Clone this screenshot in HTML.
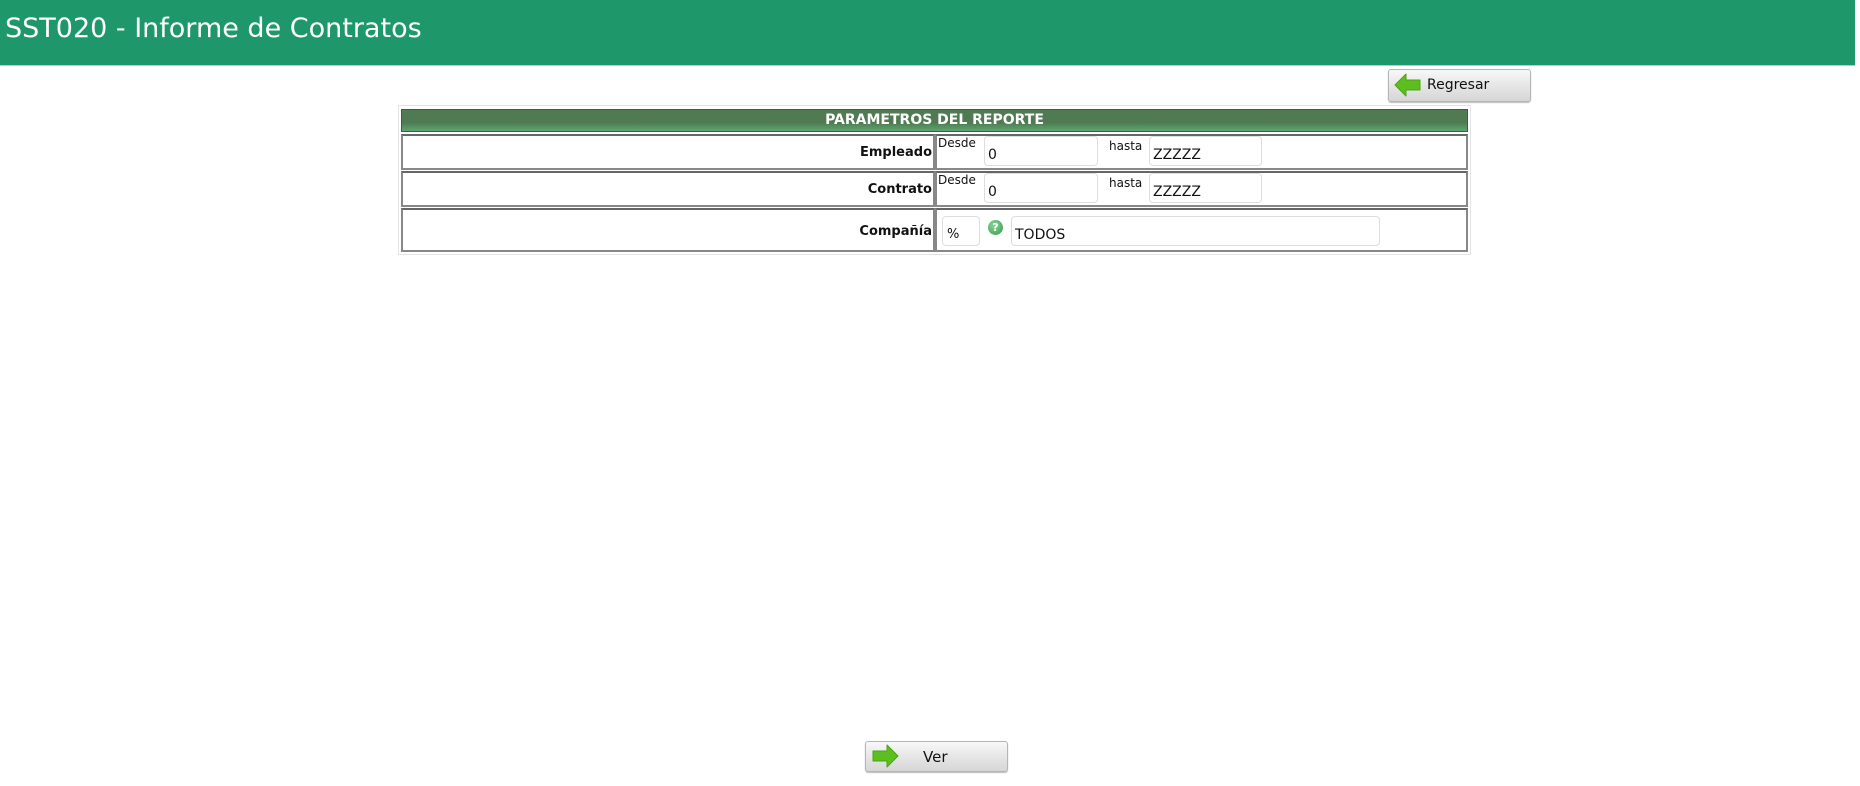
<!DOCTYPE html>
<html><head><meta charset="utf-8"><style>
body{margin:0;width:1860px;height:786px;background:#fff;position:relative;overflow:hidden;font-family:"DejaVu Sans","Liberation Sans",sans-serif}
.a{position:absolute}
#hdr{left:5px;top:0;width:1855px;height:65px;background:#1e986a;border-bottom:1px solid #9fd9c0}
#hdr span{position:absolute;left:5px;top:13px;color:#fff;font-size:27px;letter-spacing:0px}
.btn{position:absolute;border:1px solid #b5b5b5;border-radius:3px;background:linear-gradient(#f8f8f8,#e6e6e6 50%,#d6d6d6);box-shadow:0 1px 1px #bbb;font-size:14px;color:#111}
.box{position:absolute;border:2px solid #888;box-sizing:border-box;border-top-color:#666}
.lbl{position:absolute;font-weight:bold;font-size:13px;color:#111;text-align:right}
.inp{position:absolute;border:1px solid #ddd;border-radius:4px;background:#fff;box-sizing:border-box;font-size:14px;color:#111;padding:10px 0 0 3px}
.sm{position:absolute;font-size:12px;color:#111}
</style></head><body>
<div id="hdr"><span>SST020 - Informe de Contratos</span></div>

<div class="btn" style="left:1388px;top:69px;width:141px;height:31px">
<svg class="a" style="left:5px;top:3px" width="28" height="24" viewBox="0 0 28 24"><path d="M1 12 L12 1 L12 7 L26 7 L26 17 L12 17 L12 23 Z" fill="#5cbf1f" stroke="#4aa516" stroke-width="1" stroke-linejoin="round"/></svg>
<span class="a" style="left:38px;top:7px">Regresar</span></div>

<div class="a" style="left:398px;top:105px;width:1073px;height:150px;border:1px solid #e4e4e4;box-sizing:border-box"></div>
<div class="a" style="left:401px;top:109px;width:1067px;height:23px;background:linear-gradient(#4f7a52 0,#4f7a52 60%,#5aa870 100%);border:1px solid #3d5c40;box-sizing:border-box;color:#fff;font-weight:bold;font-size:14px;text-align:center;line-height:21px">PARAMETROS DEL REPORTE</div>

<div class="box" style="left:401px;top:134px;width:534px;height:36px"></div>
<div class="box" style="left:935px;top:134px;width:533px;height:36px"></div>
<div class="box" style="left:401px;top:171px;width:534px;height:36px"></div>
<div class="box" style="left:935px;top:171px;width:533px;height:36px"></div>
<div class="box" style="left:401px;top:208px;width:534px;height:44px"></div>
<div class="box" style="left:935px;top:208px;width:533px;height:44px"></div>

<div class="lbl" style="left:600px;width:332px;top:145px">Empleado</div>
<div class="lbl" style="left:600px;width:332px;top:182px">Contrato</div>
<div class="lbl" style="left:600px;width:332px;top:224px">Compañía</div>

<div class="sm" style="left:938px;top:136px">Desde</div>
<div class="inp" style="left:984px;top:136px;width:114px;height:30px">0</div>
<div class="sm" style="left:1109px;top:139px">hasta</div>
<div class="inp" style="left:1149px;top:136px;width:113px;height:30px">ZZZZZ</div>

<div class="sm" style="left:938px;top:173px">Desde</div>
<div class="inp" style="left:984px;top:173px;width:114px;height:30px">0</div>
<div class="sm" style="left:1109px;top:176px">hasta</div>
<div class="inp" style="left:1149px;top:173px;width:113px;height:30px">ZZZZZ</div>

<div class="inp" style="left:942px;top:216px;width:38px;height:30px;font-size:13px;padding-left:4px">%</div>
<div class="a" style="left:988px;top:220px;width:15px;height:15px;border-radius:50%;background:radial-gradient(circle at 40% 35%,#8fd49a,#2e9a48);color:#fff;font-size:11px;font-weight:bold;text-align:center;line-height:15px">?</div>
<div class="inp" style="left:1011px;top:216px;width:369px;height:30px">TODOS</div>

<div class="btn" style="left:865px;top:741px;width:141px;height:29px">
<svg class="a" style="left:5px;top:2px" width="28" height="24" viewBox="0 0 28 24"><path d="M27 12 L16 1 L16 7 L2 7 L2 17 L16 17 L16 23 Z" fill="#5cbf1f" stroke="#4aa516" stroke-width="1" stroke-linejoin="round"/></svg>
<span class="a" style="left:57px;top:6px;font-size:15px">Ver</span></div>
</body></html>
